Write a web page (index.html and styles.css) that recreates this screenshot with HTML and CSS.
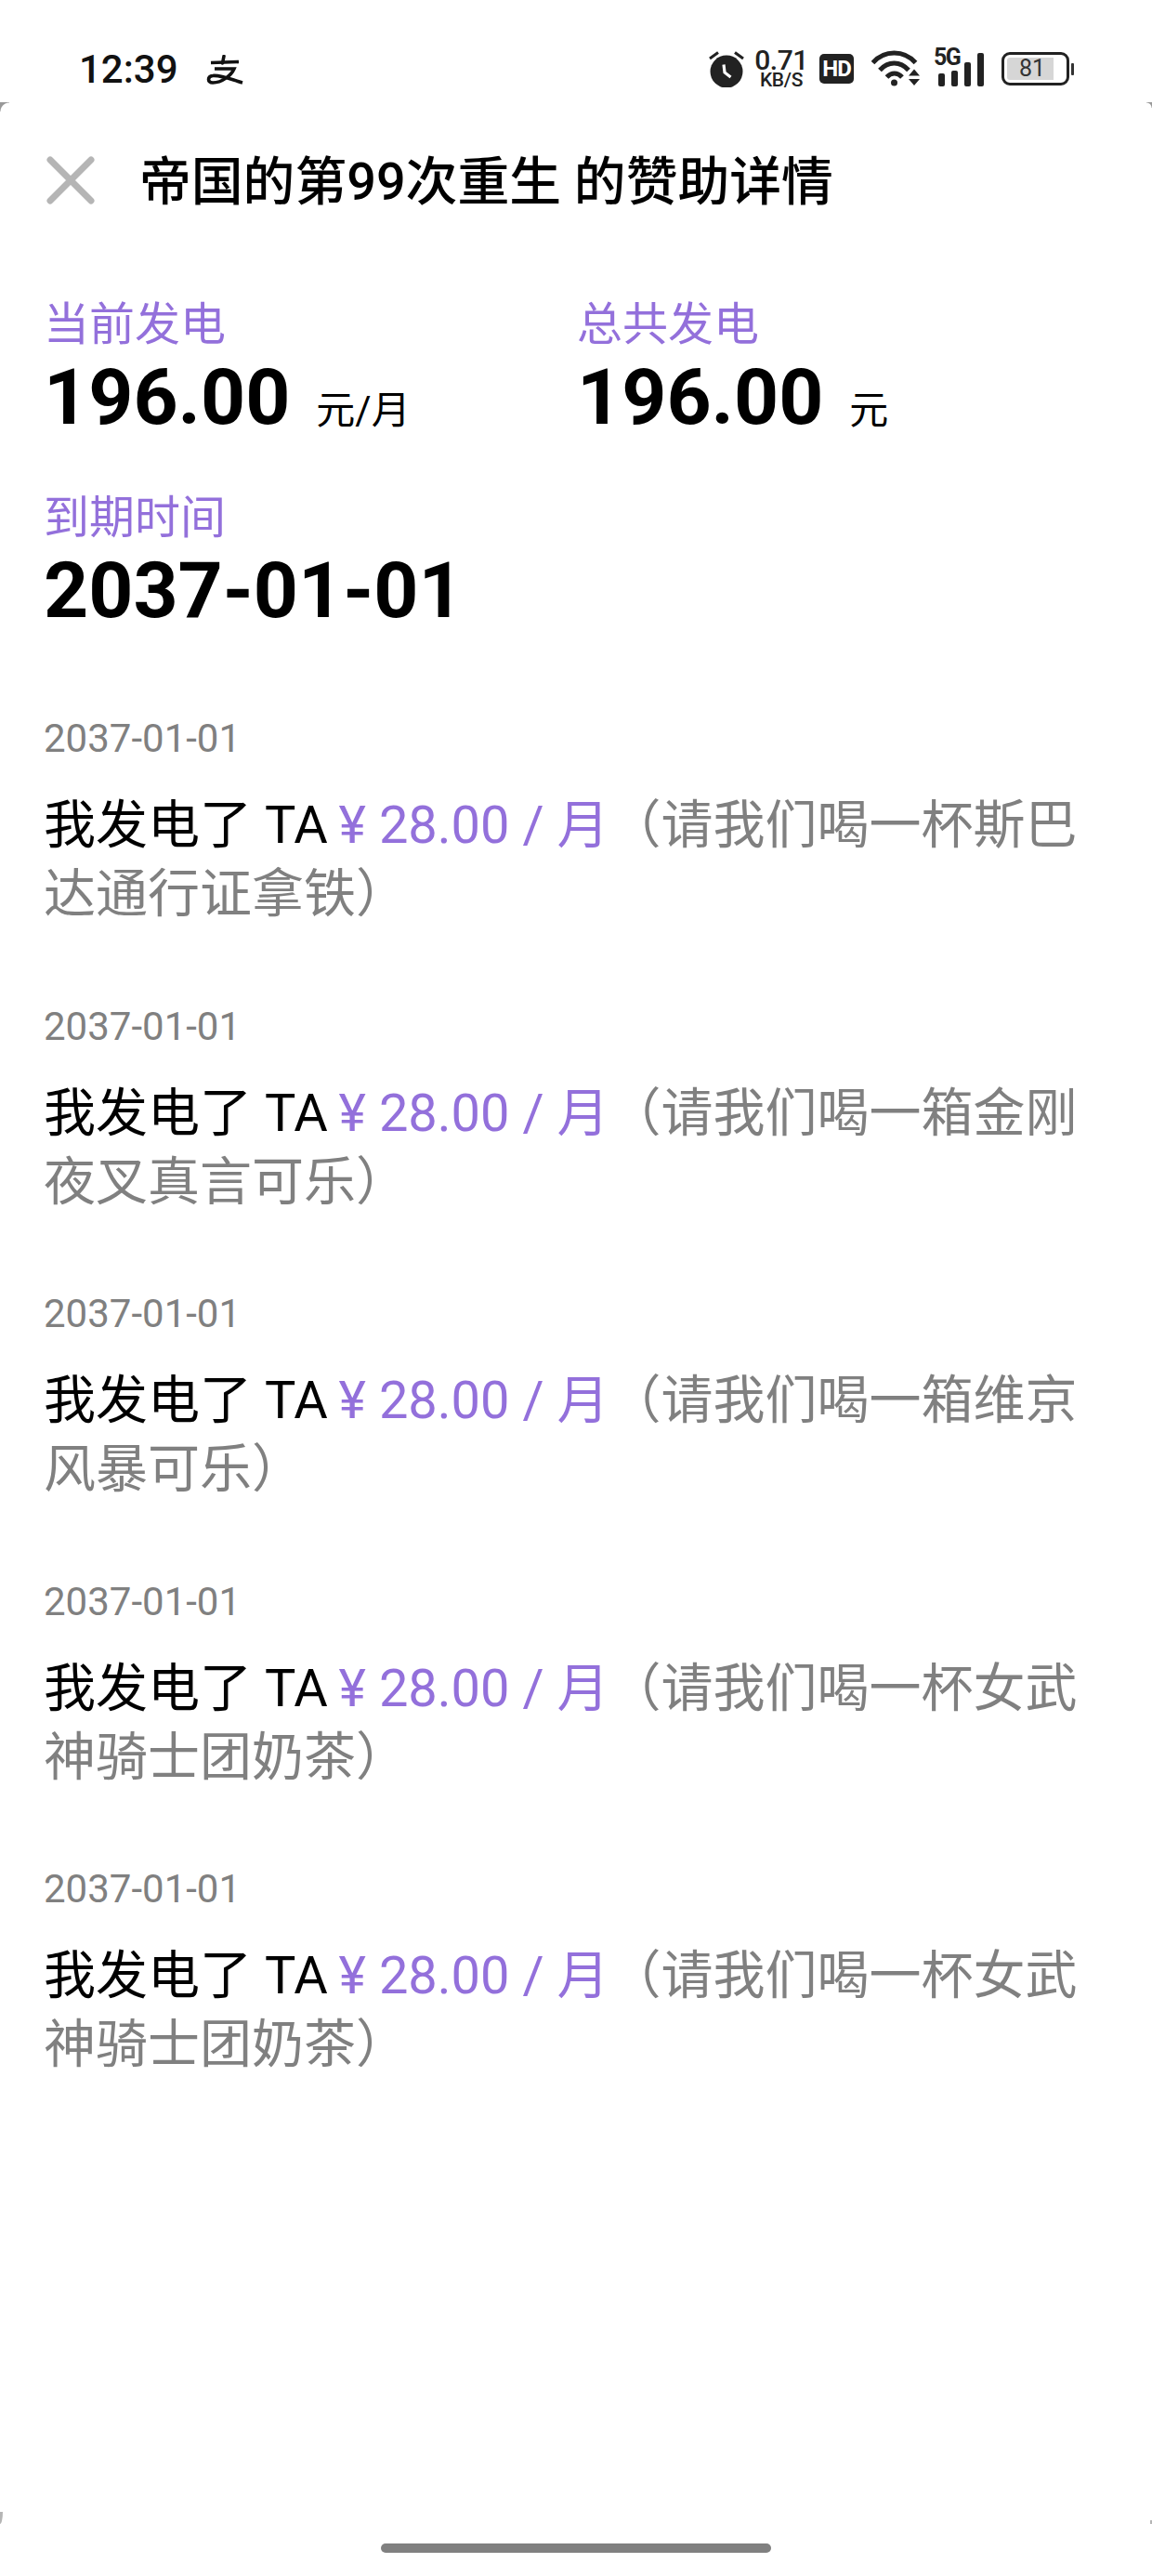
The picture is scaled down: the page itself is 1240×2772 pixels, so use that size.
FILE: index.html
```html
<!DOCTYPE html>
<html lang="zh-CN">
<head>
<meta charset="utf-8">
<title>赞助详情</title>
<link rel="stylesheet" href="styles.css">
</head>
<body>
<div class="page">
  <div class="statusbar">
    <div class="status-left">
      <span class="time">12:39</span>
      <svg class="ali" viewBox="0 0 40 32" fill="none" stroke="#111" stroke-width="3.6" stroke-linecap="round"><path d="M19 1.5 17.500 9"/><path d="M5 8.500 35 7.500" stroke-linecap="butt"/><path d="M9 15H30C27 22 17 30 7 30C1 30 1 23 7 22.500C16 21.500 28 27 39 30" stroke-linecap="butt"/></svg>
    </div>
    <div class="status-right">
      <svg class="alarm" viewBox="0 0 38 40"><circle cx="19" cy="23" r="17.500" fill="#222"/><path d="M10 2.500 1 9M28 2.500 37 9" stroke="#222" stroke-width="3" fill="none"/><path d="M16 15.500 17 24 23.500 29" stroke="#fff" stroke-width="3.200" fill="none"/></svg>
      <div class="speed"><span class="speed-num">0.71</span><span class="speed-unit">KB/S</span></div>
      <div class="hd">HD</div>
      <svg class="wifi" viewBox="0 0 52 40" fill="none" stroke="#222" stroke-width="5"><path d="M1.500 13.500C14 -0.500 35 -0.500 47.500 13.500"/><path d="M9 21.500C18 11.500 31 11.500 40 21.500"/><path d="M16.500 29C21.500 23.500 28 23.500 33 29"/><circle cx="24.500" cy="35" r="3.500" fill="#222" stroke="none"/><path d="M40 27.500 46 20.500 52 27.500ZM40 31 52 31 46 38Z" fill="#222" stroke="none"/></svg>
      <div class="signal">
        <span class="five-g">5G</span>
        <span class="bar bar-1"></span><span class="bar bar-2"></span><span class="bar bar-3"></span><span class="bar bar-4"></span>
      </div>
      <div class="battery-wrap">
        <div class="battery"><div class="level"></div><span class="battery-num">81</span></div>
        <span class="nib"></span>
      </div>
    </div>
  </div>

  <header class="title-row">
    <svg class="close" viewBox="0 0 52 52" fill="none" stroke="#b5b5b5" stroke-width="7" stroke-linecap="round"><path d="M4 4 48 48M48 4 4 48"/></svg>
    <h1 class="title">帝国的第99次重生 的赞助详情</h1>
  </header>

  <section class="stats">
    <div class="stat">
      <div class="stat-label">当前发电</div>
      <div class="stat-value">196.00<span class="stat-unit">元/月</span></div>
    </div>
    <div class="stat">
      <div class="stat-label">总共发电</div>
      <div class="stat-value">196.00<span class="stat-unit">元</span></div>
    </div>
    <div class="stat">
      <div class="stat-label">到期时间</div>
      <div class="stat-value">2037-01-01</div>
    </div>
  </section>

  <section class="records">
    <article class="record">
      <div class="record-date">2037-01-01</div>
      <p class="record-text">我发电了 TA <span class="amount">¥ 28.00 / 月</span><span class="note">（请我们喝一杯斯巴达通行证拿铁）</span></p>
    </article>
    <article class="record">
      <div class="record-date">2037-01-01</div>
      <p class="record-text">我发电了 TA <span class="amount">¥ 28.00 / 月</span><span class="note">（请我们喝一箱金刚夜叉真言可乐）</span></p>
    </article>
    <article class="record">
      <div class="record-date">2037-01-01</div>
      <p class="record-text">我发电了 TA <span class="amount">¥ 28.00 / 月</span><span class="note">（请我们喝一箱维京风暴可乐）</span></p>
    </article>
    <article class="record">
      <div class="record-date">2037-01-01</div>
      <p class="record-text">我发电了 TA <span class="amount">¥ 28.00 / 月</span><span class="note">（请我们喝一杯女武神骑士团奶茶）</span></p>
    </article>
    <article class="record">
      <div class="record-date">2037-01-01</div>
      <p class="record-text">我发电了 TA <span class="amount">¥ 28.00 / 月</span><span class="note">（请我们喝一杯女武神骑士团奶茶）</span></p>
    </article>
  </section>

  <div class="home-bar"></div>
  <span class="corner corner-tl"></span><span class="corner corner-tr"></span><span class="corner corner-bl"></span><span class="corner corner-br"></span>
</div>
</body>
</html>
```

FILE: styles.css
```css
* { box-sizing: border-box; }
html, body { margin: 0; padding: 0; background: #fff; }
body { font-family: Roboto, "Noto Sans CJK SC", sans-serif; color: #000; }
.page { position: relative; width: 1240px; height: 2772px; overflow: hidden; background: #fff; }

.statusbar { height: 110px; padding: 54px 84px 0 85px; display: flex; justify-content: space-between; align-items: flex-start; }
.status-left { display: flex; align-items: center; height: 42px; gap: 30px; }
.time { font-size: 42px; line-height: 42px; font-weight: 500; color: #111; }
.ali { width: 40px; height: 32px; }
.status-right { display: flex; align-items: center; height: 42px; margin-top: -1px; color: #222; }
.alarm { width: 38px; height: 40px; margin-right: 14px; }
.speed { width: 52px; margin-right: 15px; display: flex; flex-direction: column; align-items: center; }
.speed-num { font-size: 30px; line-height: 24px; font-weight: 500; letter-spacing: -0.5px; }
.speed-unit { font-size: 21px; line-height: 18px; font-weight: 500; letter-spacing: -0.3px; }
.hd { width: 37px; height: 32px; margin-right: 19px; background: #222; border-radius: 5px; color: #fff; font-size: 24px; line-height: 32px; font-weight: 700; text-align: center; letter-spacing: -1px; }
.wifi { width: 52px; height: 40px; margin-right: 15px; }
.signal { position: relative; width: 55px; height: 38px; display: flex; align-items: flex-end; justify-content: flex-end; gap: 7px; margin-right: 18px; padding-right: 1px; }
.five-g { position: absolute; left: 0; top: -5px; font-size: 25px; line-height: 24px; font-weight: 700; letter-spacing: -1.5px; }
.bar { width: 7px; background: #222; border-radius: 2px; }
.bar-1 { height: 14px; }
.bar-2 { height: 17px; }
.bar-3 { height: 26px; }
.bar-4 { height: 36px; }
.battery-wrap { display: flex; align-items: center; gap: 2px; }
.battery { position: relative; width: 73px; height: 36px; border: 3px solid #222; border-radius: 9px; padding: 3px; }
.level { width: 50px; height: 100%; background: #d6d6d6; border-radius: 3px 0 0 3px; }
.battery-num { position: absolute; left: 0; right: 7px; top: 0; bottom: 0; text-align: center; font-size: 25px; line-height: 30px; color: #333; }
.nib { width: 3px; height: 13px; background: #333; border-radius: 1px; }

.title-row { height: 60px; margin-top: 56px; padding-left: 50px; display: flex; align-items: center; gap: 48px; }
.close { width: 52px; height: 52px; flex: none; margin-top: -4px; }
.title { margin: 0; font-size: 55.8px; line-height: 60px; font-weight: 500; color: #000; white-space: nowrap; }

.stats { margin-top: 96px; padding-left: 47px; display: grid; grid-template-columns: 574px 1fr; row-gap: 46px; }
.stat-label { font-size: 49px; line-height: 56px; color: #9370db; }
.stat-value { font-size: 84px; line-height: 84px; font-weight: 700; color: #000; margin-top: 8px; }
.stat-unit { font-size: 42px; font-weight: 400; margin-left: 28px; }

.records { margin-top: 92px; padding: 0 47px; display: flex; flex-direction: column; gap: 80.5px; }
.record-date { font-size: 42px; line-height: 50px; color: #808080; }
.record-text { margin: 31px 0 0; font-size: 56px; line-height: 74px; color: #000; }
.amount { color: #9370db; margin-left: -2px; }
.note { color: #808080; }

.home-bar { position: absolute; left: 410px; top: 2737px; width: 420px; height: 10px; background: #808080; border-radius: 5px; }
.corner { position: absolute; width: 10px; height: 10px; }
.corner-tl { left: 0; top: 110px; background: radial-gradient(circle at 100% 100%, #fff 9px, #999 10px); }
.corner-tr { right: 0; top: 110px; width: 6px; height: 6px; background: radial-gradient(circle at 0 100%, #fff 5px, #999 6px); }
.corner-bl { left: 0; top: 2703px; width: 3px; height: 13px; background: #b5b5b5; border-radius: 0 0 100% 0; }
.corner-br { right: 0; top: 2712px; width: 2px; height: 4px; background: #b5b5b5; }
```
